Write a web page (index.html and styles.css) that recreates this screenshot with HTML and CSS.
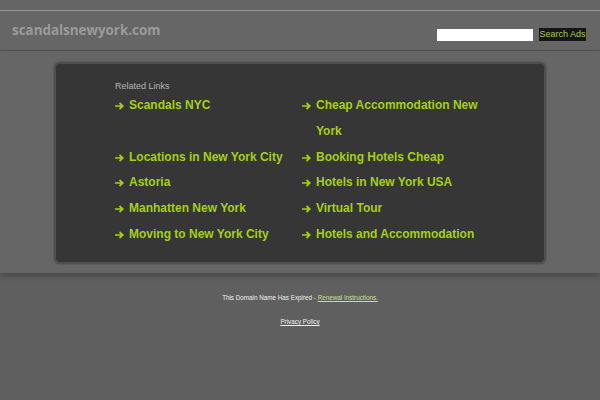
FILE: index.html
```html
<!DOCTYPE html>
<html>
<head>
<meta charset="utf-8">
<title>scandalsnewyork.com</title>
<link rel="stylesheet" href="styles.css">
</head>
<body>
<div class="page">
  <div class="topbar"></div>
  <header class="header">
    <div class="logo">scandalsnewyork.com</div>
    <form class="search">
      <input class="search-input" type="text">
      <button class="search-btn" type="button">Search Ads</button>
    </form>
  </header>
  <main class="main">
    <section class="box">
      <div class="related">Related Links</div>
      <ul class="links">
        <li><a href="#"><svg class="arr" viewBox="0 0 9 8"><path d="M0 4H7.5M4.5 1L7.8 4L4.5 7" /></svg>Scandals NYC</a></li>
        <li><a href="#"><svg class="arr" viewBox="0 0 9 8"><path d="M0 4H7.5M4.5 1L7.8 4L4.5 7" /></svg><span>Cheap Accommodation New York</span></a></li>
        <li><a href="#"><svg class="arr" viewBox="0 0 9 8"><path d="M0 4H7.5M4.5 1L7.8 4L4.5 7" /></svg>Locations in New York City</a></li>
        <li><a href="#"><svg class="arr" viewBox="0 0 9 8"><path d="M0 4H7.5M4.5 1L7.8 4L4.5 7" /></svg>Booking Hotels Cheap</a></li>
        <li><a href="#"><svg class="arr" viewBox="0 0 9 8"><path d="M0 4H7.5M4.5 1L7.8 4L4.5 7" /></svg>Astoria</a></li>
        <li><a href="#"><svg class="arr" viewBox="0 0 9 8"><path d="M0 4H7.5M4.5 1L7.8 4L4.5 7" /></svg>Hotels in New York USA</a></li>
        <li><a href="#"><svg class="arr" viewBox="0 0 9 8"><path d="M0 4H7.5M4.5 1L7.8 4L4.5 7" /></svg>Manhatten New York</a></li>
        <li><a href="#"><svg class="arr" viewBox="0 0 9 8"><path d="M0 4H7.5M4.5 1L7.8 4L4.5 7" /></svg>Virtual Tour</a></li>
        <li><a href="#"><svg class="arr" viewBox="0 0 9 8"><path d="M0 4H7.5M4.5 1L7.8 4L4.5 7" /></svg>Moving to New York City</a></li>
        <li><a href="#"><svg class="arr" viewBox="0 0 9 8"><path d="M0 4H7.5M4.5 1L7.8 4L4.5 7" /></svg>Hotels and Accommodation</a></li>
      </ul>
    </section>
  </main>
  <footer class="footer">
    <p class="expired">This Domain Name Has Expired - <a href="#" class="renew">Renewal Instructions.</a></p>
    <p class="privacy"><a href="#">Privacy Policy</a></p>
  </footer>
</div>
</body>
</html>
```

FILE: styles.css
```css
html, body {
  margin: 0;
  padding: 0;
  background: #5f5f5f;
  height: 100%;
}
body {
  font-family: "Liberation Sans", Arial, sans-serif;
}
.page {
  width: 600px;
}
.topbar {
  height: 10px;
  background: #656565;
  border-bottom: 1px solid #959595;
}
.header {
  height: 39px;
  background: #666666;
  border-bottom: 1px solid #555555;
  display: flex;
  align-items: center;
  justify-content: space-between;
  padding: 0 14px 0 12px;
}
.logo {
  font-family: "Open Sans", sans-serif;
  font-weight: 700;
  font-size: 13.4px;
  color: #9b9b9b;
  margin-top: -1px;
}
.search {
  display: flex;
  align-items: center;
  gap: 6px;
  margin: 8px 0 0 0;
}
.search-input {
  width: 96px;
  height: 12px;
  border: 0;
  padding: 0;
  margin: 0;
  background: #ffffff;
  box-sizing: border-box;
}
.search-btn {
  height: 13px;
  width: 47px;
  border: 0;
  padding: 0;
  margin: 0;
  background: #151515;
  color: #a6cc58;
  font-family: "Liberation Sans", Arial, sans-serif;
  font-size: 9px;
  line-height: 13px;
}
.main {
  background: #666666;
  padding: 11px 0 9px;
  box-shadow: 0 3px 6px rgba(0,0,0,0.25);
  position: relative;
}
.box {
  width: 492px;
  height: 202px;
  margin: 0 auto;
  box-sizing: border-box;
  background: #363636;
  border: 2px solid #4f4f4f;
  border-radius: 6px;
  box-shadow: 0 0 2px rgba(0,0,0,0.35);
  padding: 16px 0 0 59px;
}
.related {
  font-size: 9px;
  color: #b4b4b4;
  line-height: 12px;
}
.links {
  list-style: none;
  margin: 1px 0 0;
  padding: 0;
  display: grid;
  grid-template-columns: 187px 187px;
}
.links li {
  font-size: 12px;
  font-weight: 700;
  line-height: 25.75px;
}
.links a {
  color: #a5d015;
  text-decoration: none;
  display: flex;
  align-items: flex-start;
}
.arr {
  width: 9px;
  height: 8px;
  margin: 9px 5px 0 0;
  flex: none;
  fill: none;
  stroke: #a5d015;
  stroke-width: 1.7;
}
.footer {
  text-align: center;
  padding-top: 20px;
}
.footer p {
  margin: 0;
  font-size: 6.3px;
  color: #f0f0f0;
}
.expired {
  line-height: 10px;
}
.privacy {
  margin-top: 14px !important;
  line-height: 10px;
}
.footer a {
  color: #f0f0f0;
  text-decoration: underline;
}
.footer a.renew {
  color: #c9e07e;
}
```
